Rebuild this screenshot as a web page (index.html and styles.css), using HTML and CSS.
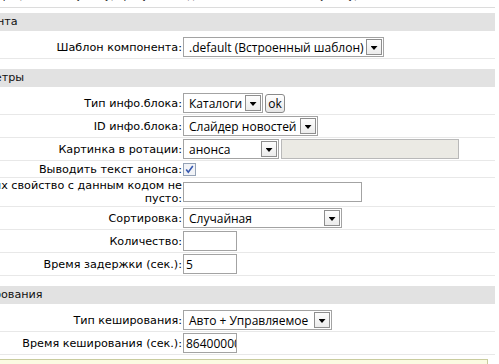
FILE: index.html
```html
<!DOCTYPE html>
<html lang="ru">
<head>
<meta charset="utf-8">
<title>Параметры компонента</title>
<link rel="stylesheet" href="styles.css">
</head>
<body>
<div class="page">
  <div class="note">Для работы слайдера (на основе jQuery) требуется подключенная библиотека jQuery).</div>
  <div class="rule"></div>

  <section class="group">
    <div class="heading">Шаблон компонента</div>
    <div class="row first">
      <div class="label"><span>Шаблон компонента:</span></div>
      <div class="value">
        <div class="sel w-tpl"><span class="sel-text">.default (Встроенный шаблон)</span><span class="sel-btn"></span></div>
      </div>
    </div>
  </section>

  <section class="group">
    <div class="heading">Основные параметры</div>
    <div class="row first">
      <div class="label"><span>Тип инфо.блока:</span></div>
      <div class="value">
        <div class="sel w-type"><span class="sel-text">Каталоги</span><span class="sel-btn"></span></div>
        <button class="ok" type="button">ok</button>
      </div>
    </div>
    <div class="row">
      <div class="label"><span>ID инфо.блока:</span></div>
      <div class="value">
        <div class="sel w-id"><span class="sel-text">Слайдер новостей</span><span class="sel-btn"></span></div>
      </div>
    </div>
    <div class="row">
      <div class="label"><span>Картинка в ротации:</span></div>
      <div class="value">
        <div class="sel w-pic"><span class="sel-text">анонса</span><span class="sel-btn"></span></div>
        <input class="inp disabled w-dis" type="text" disabled>
      </div>
    </div>
    <div class="row">
      <div class="label"><span>Выводить текст анонса:</span></div>
      <div class="value">
        <svg class="chk" width="13" height="13" viewBox="0 0 13 13"><rect x="0.5" y="0.5" width="12" height="12" fill="#f1f3f7" stroke="#94a2b6"/><path d="M3.2 6.4 L5.3 9.2 L9.8 3" fill="none" stroke="#3658b0" stroke-width="1.6"/></svg>
      </div>
    </div>
    <div class="row">
      <div class="label"><span>Показывать только элементы, у которых свойство с данным кодом не<br>пусто:</span></div>
      <div class="value">
        <input class="inp w-prop" type="text">
      </div>
    </div>
    <div class="row">
      <div class="label"><span>Сортировка:</span></div>
      <div class="value">
        <div class="sel w-sort"><span class="sel-text">Случайная</span><span class="sel-btn"></span></div>
      </div>
    </div>
    <div class="row">
      <div class="label"><span>Количество:</span></div>
      <div class="value">
        <input class="inp w-num" type="text">
      </div>
    </div>
    <div class="row">
      <div class="label"><span>Время задержки (сек.):</span></div>
      <div class="value">
        <input class="inp w-num" type="text" value="5">
      </div>
    </div>
  </section>

  <section class="group">
    <div class="heading">Настройки кеширования</div>
    <div class="row first">
      <div class="label"><span>Тип кеширования:</span></div>
      <div class="value">
        <div class="sel w-cache"><span class="sel-text">Авто + Управляемое</span><span class="sel-btn"></span></div>
      </div>
    </div>
    <div class="row">
      <div class="label"><span>Время кеширования (сек.):</span></div>
      <div class="value">
        <input class="inp w-num" type="text" value="86400000">
      </div>
    </div>
  </section>

  <div class="hint"></div>
</div>
</body>
</html>
```

FILE: styles.css
```css
* { box-sizing: border-box; }

html, body {
  margin: 0;
  padding: 0;
  background: #fff;
}

body {
  overflow: hidden;
  font-family: "DejaVu Sans", Verdana, sans-serif;
  font-size: 11.2px;
  color: #000;
}

.page {
  width: 595px;
  margin-left: -100px;
}

.note {
  width: 377px;
  height: 12px;
  margin-top: -10px;
  line-height: 12px;
  font-size: 10px;
  text-align: right;
  white-space: nowrap;
  color: #222;
}

.rule {
  height: 1px;
  margin-top: 5px;
  background: #dcdcdc;
}

.group { margin-top: 5px; }
.group + .group { margin-top: 10px; }

.heading {
  height: 18px;
  line-height: 18px;
  padding-left: 0;
  text-indent: -4px;
  background: #e2e2e2;
  white-space: nowrap;
  color: #111;
}

.row {
  display: grid;
  grid-template-columns: 283px 1fr;
  align-items: center;
  padding: 1px 0;
  border-bottom: 1px solid #e8e8e8;
}

.row.first { padding-top: 6px; }

.label {
  display: flex;
  justify-content: flex-end;
  padding-right: 1px;
  line-height: 13px;
}

.label span {
  white-space: nowrap;
  text-align: right;
}

.value {
  display: flex;
  align-items: center;
  gap: 2px;
}

/* select look-alike */
.sel {
  display: flex;
  align-items: center;
  height: 20px;
  border: 1px solid #a3a3a3;
  background: #fff;
  font-family: "Open Sans", "DejaVu Sans", sans-serif;
  font-size: 12px;
  color: #000;
}

.sel-text {
  flex: 1;
  padding-left: 5px;
  white-space: nowrap;
  overflow: hidden;
}

.sel-btn {
  display: flex;
  align-items: center;
  justify-content: center;
  width: 16px;
  height: 16px;
  margin-right: 1px;
  border: 1px solid #8e8e8e;
  background: linear-gradient(#fdfdfd, #ececec);
}

.sel-btn::after {
  content: "";
  width: 7px;
  height: 4px;
  margin-top: 2px;
  background: #000;
  clip-path: polygon(0 0, 100% 0, 50% 100%);
}

.w-tpl { width: 201px; }
.w-type { width: 80px; }
.w-id { width: 135px; }
.w-pic { width: 96px; }
.w-sort { width: 159px; }
.w-cache { width: 149px; }

.ok {
  height: 19px;
  width: 20px;
  padding: 0;
  border: 1px solid #8a8a8a;
  border-radius: 3px;
  background: linear-gradient(#ffffff, #e6e6e6);
  font-family: "Open Sans", "DejaVu Sans", sans-serif;
  font-size: 12px;
  line-height: 15px;
  color: #000;
}

.inp {
  height: 20px;
  margin: 0;
  padding: 0 0 0 2px;
  border: 1px solid #a3a3a3;
  background: #fff;
  font-family: "Open Sans", "DejaVu Sans", sans-serif;
  font-size: 12px;
  color: #000;
  outline: none;
}

.inp.disabled {
  background: #ebeae4;
  border-color: #b9b9b9;
}

.w-dis { width: 178px; }
.w-prop { width: 179px; }
.w-num { width: 54px; }

.chk {
  display: block;
  margin-top: 1px;
}

.hint {
  height: 30px;
  margin-top: 4px;
  margin-right: 7px;
  border: 1px solid #c9cc9e;
  background: #fbfbe2;
}
```
